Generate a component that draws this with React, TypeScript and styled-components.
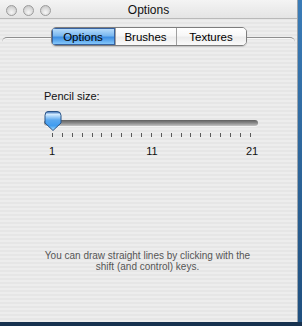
import styled, { createGlobalStyle } from 'styled-components';

const GlobalStyle = createGlobalStyle`
  html, body {
    margin: 0;
    padding: 0;
    background: #2f6ba3;
  }
  body {
    font-family: "Liberation Sans", Arial, sans-serif;
    width: 302px;
    height: 326px;
    overflow: hidden;
  }
`;

const Desktop = styled.div`
  width: 302px;
  height: 326px;
  display: flex;
  flex-direction: column;
  background: linear-gradient(#3a7cb8, #1f4f7e);
`;

const Window = styled.div`
  width: 298px;
  height: 322px;
  display: flex;
  flex-direction: column;
  border-right: 1px solid #9aa3ab;
  box-sizing: border-box;
  background: repeating-linear-gradient(
    to bottom,
    #ededed 0px,
    #ededed 2px,
    #e6e6e6 2px,
    #e6e6e6 4px
  );
`;

const BottomStrip = styled.div`
  flex: 1;
  background: #17324f;
`;

const TitleBar = styled.div`
  height: 18px;
  display: grid;
  grid-template-columns: 1fr auto 1fr;
  align-items: center;
  background: linear-gradient(#f4f4f4, #e4e4e4);
  border-bottom: 1px solid #b9b9b9;
`;

const Lights = styled.div`
  display: flex;
  gap: 6px;
  padding-left: 6px;
  padding-top: 3px;
`;

const Light = styled.div`
  width: 11px;
  height: 11px;
  border-radius: 50%;
  box-sizing: border-box;
  border: 1px solid #9c9c9c;
  background: radial-gradient(circle at 50% 70%, #f6f6f6 0%, #d9d9d9 55%, #bdbdbd 100%);
`;

const Title = styled.div`
  font-size: 12px;
  color: #111;
  padding-top: 2px;
`;

const TabHeader = styled.div`
  position: relative;
  display: flex;
  justify-content: center;
  margin-top: 8px;

  &::before {
    content: '';
    position: absolute;
    left: 2px;
    right: 2px;
    top: 10px;
    height: 6px;
    border-top: 1px solid #8e8e8e;
    border-radius: 5px 5px 0 0;
    box-shadow: inset 0 1px 0 #f8f8f8;
  }
`;

const Segmented = styled.div`
  position: relative;
  display: flex;
  height: 19px;
  box-sizing: border-box;
  border: 1px solid #7d7d7d;
  border-radius: 5px;
  overflow: hidden;
  box-shadow: 0 1px 1px rgba(0, 0, 0, 0.15);
`;

const Segment = styled.div<{ $active?: boolean; $w: number }>`
  width: ${({ $w }) => $w}px;
  display: flex;
  align-items: center;
  justify-content: center;
  font-size: 11.5px;
  color: #000;
  box-sizing: border-box;
  border-left: 1px solid #a0a0a0;
  background: ${({ $active }) =>
    $active
      ? 'linear-gradient(#bfe0fb 0%, #7ab8f0 45%, #3f8fe2 55%, #8ed0ff 100%)'
      : 'linear-gradient(#ffffff 0%, #f7f7f7 45%, #ececec 55%, #fafafa 100%)'};
  box-shadow: ${({ $active }) => ($active ? 'inset 0 0 0 1px #3762a0' : 'none')};

  &:first-child {
    border-left: none;
  }
`;

const Content = styled.div`
  display: flex;
  flex-direction: column;
  padding-left: 44px;
  margin-top: 44px;
`;

const Label = styled.div`
  font-size: 11px;
  line-height: 13px;
  color: #111;
`;

const Slider = styled.div`
  position: relative;
  width: 214px;
  margin-top: 12px;
  height: 20px;
`;

const Track = styled.div`
  margin-top: 5px;
  height: 6px;
  border-radius: 3px;
  background: linear-gradient(#5f5f5f, #8a8a8a 50%, #c4c4c4);
  box-shadow: 0 1px 0 #f4f4f4;
`;

const Thumb = styled.svg`
  position: absolute;
  left: 0;
  top: -4px;
`;

const Ticks = styled.div`
  display: flex;
  justify-content: space-between;
  width: 199px;
  margin-left: 8px;
  height: 5px;
  margin-top: -2px;
`;

const Tick = styled.div`
  width: 1px;
  height: 4px;
  background: #5a5a5a;
`;

const Scale = styled.div`
  display: flex;
  justify-content: space-between;
  width: 216px;
  margin-top: 7px;
`;

const ScaleLabel = styled.div`
  width: 16px;
  text-align: center;
  font-size: 11px;
  line-height: 13px;
  color: #111;
`;

const Hint = styled.div`
  margin-top: 93px;
  text-align: center;
  font-size: 10px;
  line-height: 10.5px;
  color: #555;
  padding-right: 2px;
`;

export default function App() {
  const tabs = [
    { key: 'options', label: 'Options', w: 63 },
    { key: 'brushes', label: 'Brushes', w: 61 },
    { key: 'textures', label: 'Textures', w: 70 },
  ];

  return (
    <>
      <GlobalStyle />
      <Desktop>
        <Window>
          <TitleBar>
            <Lights>
              <Light />
              <Light />
              <Light />
            </Lights>
            <Title>Options</Title>
            <div />
          </TitleBar>
          <TabHeader>
            <Segmented>
              {tabs.map((t) => (
                <Segment key={t.key} $w={t.w} $active={t.key === 'options'}>
                  {t.label}
                </Segment>
              ))}
            </Segmented>
          </TabHeader>
          <Content>
            <Label>Pencil size:</Label>
            <Slider>
              <Track />
              <Thumb width="18" height="21" viewBox="0 0 18 21">
                <defs>
                  <linearGradient id="thumbFill" x1="0" y1="0" x2="0" y2="1">
                    <stop offset="0" stopColor="#2c64b0" />
                    <stop offset="0.15" stopColor="#d4ecff" />
                    <stop offset="0.45" stopColor="#5aa8ef" />
                    <stop offset="0.75" stopColor="#3f9cf0" />
                    <stop offset="1" stopColor="#aee4ff" />
                  </linearGradient>
                </defs>
                <path
                  d="M4 0.5 H13 Q17 0.5 17 4.5 V12 L9 19.5 L1 12 V4.5 Q1 0.5 4 0.5 Z"
                  fill="url(#thumbFill)"
                  stroke="#2b5487"
                  strokeWidth="1"
                />
              </Thumb>
            </Slider>
            <Ticks>
              {Array.from({ length: 21 }).map((_, i) => (
                <Tick key={i} />
              ))}
            </Ticks>
            <Scale>
              <ScaleLabel>1</ScaleLabel>
              <ScaleLabel>11</ScaleLabel>
              <ScaleLabel>21</ScaleLabel>
            </Scale>
          </Content>
          <Hint>
            You can draw straight lines by clicking with the
            <br />
            shift (and control) keys.
          </Hint>
        </Window>
        <BottomStrip />
      </Desktop>
    </>
  );
}
